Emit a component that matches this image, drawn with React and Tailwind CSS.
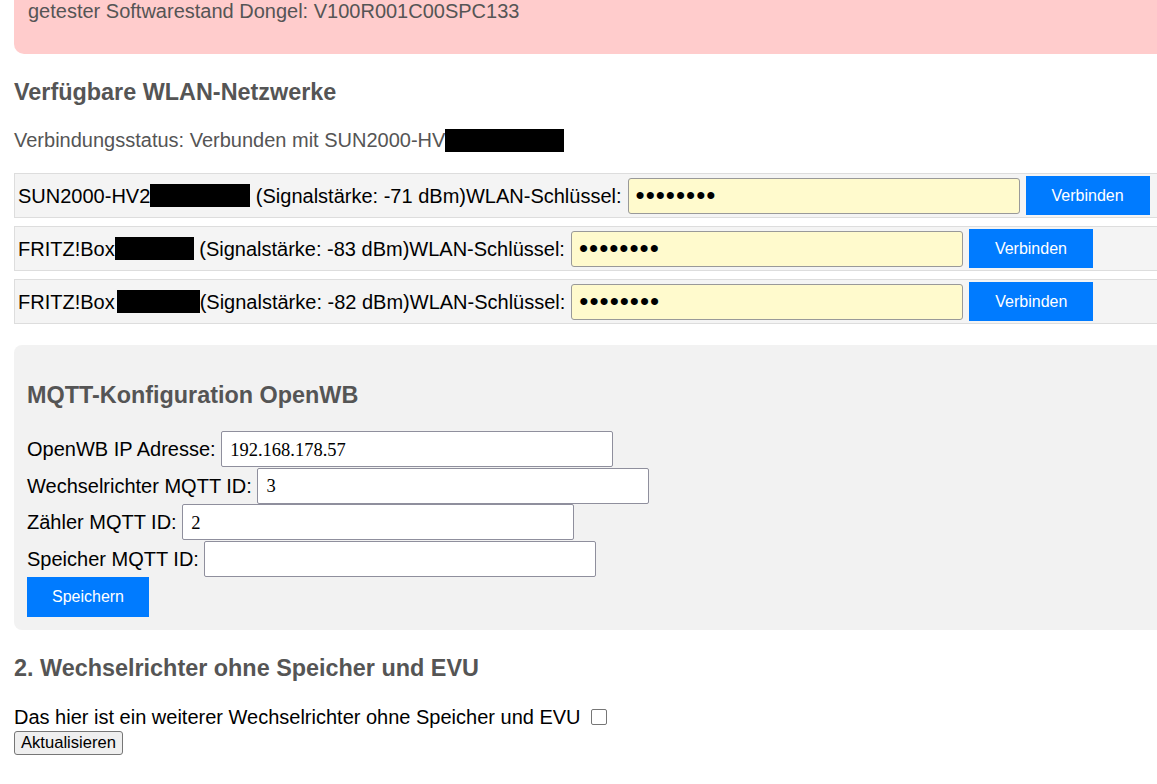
import React from "react";

const networks = [
  { name: "SUN2000-HV2", mask: "w-[100px]", signal: -71, gap: true },
  { name: "FRITZ!Box", mask: "w-[79px]", signal: -83, gap: true },
  { name: "FRITZ!Box", mask: "w-[83px] ml-[2px]", signal: -82, gap: false },
];

const mqttFields = [
  { label: "OpenWB IP Adresse:", value: "192.168.178.57" },
  { label: "Wechselrichter MQTT ID:", value: "3" },
  { label: "Zähler MQTT ID:", value: "2" },
  { label: "Speicher MQTT ID:", value: "" },
];

const App = () => {
  return (
    <div className="w-[1157px] h-[784px] overflow-hidden bg-white font-['Liberation_Sans',Arial,sans-serif] text-[20px]">
      <div className="w-[1200px] pl-[14px]">
        {/* Hinweis */}
        <div className="h-[54px] bg-[#ffcccc] rounded-bl-[10px] px-[14px] text-[#555] leading-[22px]">
          getester Softwarestand Dongel: V100R001C00SPC133
        </div>

        {/* WLAN */}
        <h3 className="mt-[24px] font-bold text-[23.4px] leading-[28px] text-[#555]">
          Verfügbare WLAN-Netzwerke
        </h3>

        <p className="mt-[22px] leading-[24px] text-[#555] flex items-center">
          <span className="whitespace-pre">Verbindungsstatus: Verbunden mit SUN2000-HV</span>
          <span className="inline-block w-[119px] h-[23px] bg-black" />
        </p>

        <div className="mt-[21px] flex flex-col gap-[8px]">
          {networks.map((net, index) => (
            <div
              key={index}
              className="h-[45px] flex items-center bg-[#f4f4f4] border border-[#dddddd] px-[3px] text-black"
            >
              <span className="whitespace-pre">{net.name}</span>
              <span className={`inline-block h-[23px] bg-black ${net.mask}`} />
              <span className="whitespace-pre">
                {net.gap ? " " : ""}(Signalstärke: {net.signal} dBm)WLAN-Schlüssel:
              </span>
              <input
                type="password"
                defaultValue="12345678"
                className="ml-[6px] w-[392px] h-[36px] bg-[#fffacd] border border-[#999] rounded-[3px] px-[7px] text-[26px] tracking-[1px] font-['Liberation_Sans',Arial,sans-serif] outline-none"
              />
              <button className="ml-[6px] w-[124px] h-[39px] bg-[#007bff] text-white text-[16px]">
                Verbinden
              </button>
            </div>
          ))}
        </div>

        {/* MQTT */}
        <div className="mt-[21px] bg-[#f2f2f2] rounded-l-[8px] pt-[36px] pb-[13px] px-[13px]">
          <h3 className="font-bold text-[23.4px] leading-[28px] text-[#555]">
            MQTT-Konfiguration OpenWB
          </h3>

          <div className="mt-[22px] flex flex-col">
            {mqttFields.map((field) => (
              <div key={field.label} className="h-[36.6px] flex items-center text-black">
                <label className="whitespace-pre">{field.label} </label>
                <input
                  type="text"
                  defaultValue={field.value}
                  className="w-[392px] h-[36px] bg-white border border-[#8f8f9d] rounded-[2px] px-[8px] pt-[2px] text-[18.5px] font-['Liberation_Serif','Times_New_Roman',serif] outline-none"
                />
              </div>
            ))}
          </div>

          <button className="w-[122px] h-[40px] bg-[#007bff] text-white text-[16px]">
            Speichern
          </button>
        </div>

        {/* Zweiter Wechselrichter */}
        <h3 className="mt-[24px] font-bold text-[23.4px] leading-[28px] text-[#555]">
          2. Wechselrichter ohne Speicher und EVU
        </h3>

        <div className="mt-[23px] flex items-center leading-[24px] text-black">
          <span>Das hier ist ein weiterer Wechselrichter ohne Speicher und EVU</span>
          <span className="ml-[10px] inline-block w-[16px] h-[16px] bg-white border border-[#767676] rounded-[2px]" />
        </div>

        <button className="block mt-[2px] h-[24px] px-[6px] bg-[#efefef] border border-[#767676] rounded-[3px] text-[16.6px] leading-[20px] text-black">
          Aktualisieren
        </button>
      </div>
    </div>
  );
};

export default App;
